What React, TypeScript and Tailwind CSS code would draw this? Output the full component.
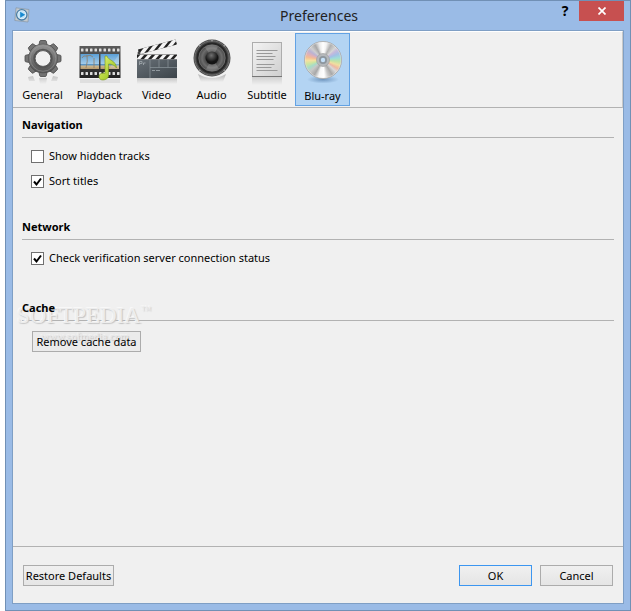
import { useState } from 'react'
import type { ReactNode } from 'react'

function GearIcon() {
  const teeth = [0, 45, 90, 135, 180, 225, 270, 315]
  return (
    <svg viewBox="0 0 48 52" className="h-[52px] w-12" aria-hidden="true">
      <defs>
        <linearGradient id="gear" x1="0" y1="0" x2="0" y2="1">
          <stop offset="0" stopColor="#8b8b8b" />
          <stop offset="1" stopColor="#5a5a5a" />
        </linearGradient>
        <linearGradient id="gearShade" x1="0" y1="0" x2="0" y2="1">
          <stop offset="0" stopColor="#999" stopOpacity="0.5" />
          <stop offset="1" stopColor="#999" stopOpacity="0" />
        </linearGradient>
      </defs>
      <path d="M9 42l5-1 2 5h-6zM20 43h8l-1 6h-6zM32 46l2-5 5 1-1 4z" fill="url(#gearShade)" />
      <g fill="#737373" stroke="#484848" strokeWidth="0.8">
        {teeth.map((a) => (
          <path key={a} d="M19.500 12l1.200-5.700q.2-.8 1-.8h4.600q.8 0 1 .8l1.200 5.700z" transform={`rotate(${a} 24 23.5)`} />
        ))}
      </g>
      <circle cx="24" cy="23.5" r="11" fill="none" stroke="#4c4c4c" strokeWidth="7.500" />
      <circle cx="24" cy="23.5" r="11" fill="none" stroke="url(#gear)" strokeWidth="6.500" />
      <circle cx="24" cy="23.5" r="12.800" fill="none" stroke="#a0a0a0" strokeWidth="0.5" />
      <circle cx="24" cy="23.5" r="9" fill="none" stroke="#555" strokeWidth="1.500" />
      <circle cx="24" cy="23.5" r="7.900" fill="#f0f0f0" stroke="#454545" strokeWidth="0.8" />
    </svg>
  )
}

function FilmIcon() {
  const holes = [5, 9.500, 14, 18.500, 23, 27.500, 32, 36.500, 41]
  return (
    <svg viewBox="0 0 48 52" className="h-[52px] w-12" aria-hidden="true">
      <defs>
        <linearGradient id="film" x1="0" y1="0" x2="0" y2="1">
          <stop offset="0" stopColor="#5c5c5c" />
          <stop offset="1" stopColor="#222" />
        </linearGradient>
        <linearGradient id="sky" x1="0" y1="0" x2="0" y2="1">
          <stop offset="0" stopColor="#5b9fd6" />
          <stop offset="0.65" stopColor="#a3cbe8" />
          <stop offset="0.7" stopColor="#5b95c4" />
          <stop offset="0.82" stopColor="#c9b48c" />
          <stop offset="1" stopColor="#b89a6b" />
        </linearGradient>
        <linearGradient id="note" x1="0" y1="0" x2="1" y2="1">
          <stop offset="0" stopColor="#e8f77a" />
          <stop offset="1" stopColor="#8cbb10" />
        </linearGradient>
      </defs>
      <rect x="4" y="44" width="40" height="4" fill="#999" opacity="0.2" />
      <rect x="3.5" y="11" width="41" height="32" fill="url(#film)" />
      {holes.map((x) => (
        <g key={x} fill="#ddd">
          <rect x={x} y="13.500" width="2.500" height="3" rx="0.5" />
          <rect x={x} y="37" width="2.500" height="3" rx="0.5" />
        </g>
      ))}
      <rect x="4.500" y="19" width="18.500" height="15" fill="url(#sky)" />
      <rect x="24.500" y="19" width="18.500" height="15" fill="url(#sky)" />
      <path d="M10 33q2-7 1-13M11 21q-4-1-5 2M11 21q3-2 6 1M18 33V23" fill="none" stroke="#8f7c66" strokeWidth="0.800" />
      <path d="M43 19L33 34h10z" fill="#fff" opacity="0.2" />
      <path d="M29 21h2c1 4.500 9 4 9.500 12-2.500-3.500-6-4-8-4v12c0 4-9 6-9.500 1-.3-3.500 3.500-4.500 6-3.500z" fill="url(#note)" stroke="#78951c" strokeWidth="0.600" />
    </svg>
  )
}

function ClapperIcon() {
  const stripes = [2, 9.500, 17, 24.500, 32, 39.500]
  return (
    <svg viewBox="0 0 48 52" className="h-[52px] w-12" aria-hidden="true">
      <defs>
        <linearGradient id="board" x1="0" y1="0" x2="1" y2="1">
          <stop offset="0" stopColor="#687077" />
          <stop offset="1" stopColor="#3c444a" />
        </linearGradient>
        <linearGradient id="boardShade" x1="0" y1="0" x2="0" y2="1">
          <stop offset="0" stopColor="#888" stopOpacity="0.4" />
          <stop offset="1" stopColor="#888" stopOpacity="0" />
        </linearGradient>
        <clipPath id="armClip">
          <path d="M5 14.500L42.500 4.500l1.500 5L6 19.500z" />
        </clipPath>
        <clipPath id="barClip">
          <rect x="4" y="19.500" width="40" height="5" />
        </clipPath>
      </defs>
      <rect x="4" y="43" width="40" height="6" fill="url(#boardShade)" />
      <g clipPath="url(#armClip)">
        <rect width="48" height="24" fill="#222" />
        {stripes.map((x) => (
          <path key={x} d={`M${x} 24L${x + 19} 0h4.500L${x + 4.500} 24z`} fill="#f5f5f5" />
        ))}
      </g>
      <g clipPath="url(#barClip)">
        <rect x="4" y="19" width="40" height="6" fill="#222" />
        {stripes.map((x) => (
          <path key={x} d={`M${x + 1} 24.500l4.500-5h4l-4.500 5z`} fill="#f5f5f5" />
        ))}
      </g>
      <rect x="4" y="24.500" width="40" height="18.500" fill="url(#board)" />
      <path d="M17 24.500V43M17 32.500h27M26 24.500v8M35 24.500v8" stroke="#8d969c" strokeWidth="0.7" fill="none" />
      <path d="M6.500 30v-3.500H9V28.500H6.500M10.500 30v-2h2M19 35.500h3M23 35.500h4" stroke="#a2a9ae" strokeWidth="0.8" fill="none" />
      <circle cx="6" cy="18" r="1.500" fill="#444" />
    </svg>
  )
}

function SpeakerIcon() {
  return (
    <svg viewBox="0 0 48 52" className="h-[52px] w-12" aria-hidden="true">
      <defs>
        <radialGradient id="cone">
          <stop offset="0.4" stopColor="#3a3a3a" />
          <stop offset="0.75" stopColor="#6c6c6c" />
          <stop offset="1" stopColor="#484848" />
        </radialGradient>
        <radialGradient id="cap" cx="0.45" cy="0.3">
          <stop offset="0" stopColor="#707070" />
          <stop offset="1" stopColor="#141414" />
        </radialGradient>
        <linearGradient id="floor" x1="0" y1="0" x2="0" y2="1">
          <stop offset="0" stopColor="#777" stopOpacity="0.5" />
          <stop offset="1" stopColor="#777" stopOpacity="0" />
        </linearGradient>
      </defs>
      <path d="M10 39q14 8 28 0l-3 8H13z" fill="url(#floor)" />
      <circle cx="24" cy="23" r="18.500" fill="#4a4a4a" />
      <circle cx="24" cy="23" r="17.200" fill="none" stroke="#707070" strokeWidth="1" />
      <circle cx="24" cy="23" r="15.500" fill="#262626" />
      <circle cx="24" cy="23" r="13.200" fill="url(#cone)" stroke="#777" strokeWidth="0.800" />
      <path d="M24 23L17 12.200A13 13 0 0 1 30 11.800zM24 23l7 10.800a13 13 0 0 1-13 .5z" fill="#ccc" opacity="0.250" />
      <circle cx="24" cy="23" r="6.500" fill="url(#cap)" />
      <g fill="#aaa">
        <circle cx="24" cy="5.800" r="0.800" />
        <circle cx="11.800" cy="10.800" r="0.800" />
        <circle cx="36.200" cy="10.800" r="0.800" />
        <circle cx="11.800" cy="35.200" r="0.800" />
        <circle cx="36.200" cy="35.200" r="0.800" />
      </g>
    </svg>
  )
}

function PageIcon() {
  return (
    <svg viewBox="0 0 48 52" className="h-[52px] w-12" aria-hidden="true">
      <defs>
        <linearGradient id="page" x1="0" y1="0" x2="1" y2="1">
          <stop offset="0" stopColor="#f3f3f3" />
          <stop offset="1" stopColor="#cfcfcf" />
        </linearGradient>
        <linearGradient id="pageShade" x1="0" y1="0" x2="0" y2="1">
          <stop offset="0" stopColor="#bbb" stopOpacity="0.6" />
          <stop offset="1" stopColor="#bbb" stopOpacity="0" />
        </linearGradient>
      </defs>
      <rect x="9" y="42" width="30" height="8" fill="url(#pageShade)" />
      <rect x="9.500" y="7.500" width="29" height="34" fill="url(#page)" stroke="#adadad" />
      <path d="M9 41.500h30" stroke="#777" />
      <path d="M13.500 15.500h21M13.500 18.500h16M13.500 21.500h19M13.500 24.500h17M13.500 29.500h18M13.500 32.500h15M13.500 35.500h21" stroke="#999" strokeWidth="1" />
    </svg>
  )
}

function DiscIcon() {
  return (
    <div className="relative h-[52px] w-12" aria-hidden="true">
      <svg viewBox="0 0 48 52" className="absolute inset-0">
        <defs>
          <radialGradient id="discFloor">
            <stop offset="0" stopColor="#456f9e" stopOpacity="0.6" />
            <stop offset="1" stopColor="#456f9e" stopOpacity="0" />
          </radialGradient>
        </defs>
        <ellipse cx="24" cy="43.500" rx="16" ry="4" fill="url(#discFloor)" />
      </svg>
      <div className="absolute top-[5px] left-[5px] h-[38px] w-[38px] rounded-full border border-[#a5a5a5] bg-[conic-gradient(#ffffff_0deg,#f2f2f2_12deg,#b0b0b0_28deg,#d5d5d5_45deg,#c5b9dc_55deg,#a3bfe6_68deg,#9fdcd8_82deg,#bfe3a5_95deg,#f0dfa0_108deg,#eeb8a2_120deg,#d8d8d8_132deg,#a8a8a8_148deg,#c8c8c8_162deg,#ffffff_176deg,#f6f6f6_195deg,#a8a8a8_210deg,#c8c8c8_228deg,#a7dcc8_242deg,#cfe5a0_256deg,#f5e0a0_268deg,#f4bd94_280deg,#dfb0b8_292deg,#b9b3d4_304deg,#cfcfcf_316deg,#a8a8a8_332deg,#e8e8e8_346deg,#ffffff_360deg)]" />
      <svg viewBox="0 0 48 52" className="absolute inset-0">
        <circle cx="24" cy="24" r="18" fill="none" stroke="#fff" strokeWidth="0.6" opacity="0.6" />
        <circle cx="24" cy="24" r="6.500" fill="#b5b8bb" stroke="#999" strokeWidth="0.600" />
        <circle cx="24" cy="24" r="4" fill="#8d969e" />
        <circle cx="24" cy="24" r="2.200" fill="#c5e0f8" />
      </svg>
    </div>
  )
}

function AppLogo() {
  return (
    <svg viewBox="0 0 16 16" className="h-4 w-4" aria-hidden="true">
      <path d="M2 .8L15 2.500 14 15 .8 13.500z" fill="#c3c9ce" stroke="#8796a5" strokeWidth="0.700" />
      <circle cx="7.800" cy="7.800" r="5.200" fill="#e9f4fb" stroke="#477da6" strokeWidth="1.300" />
      <circle cx="7.800" cy="7.800" r="3.700" fill="#c2e4f8" />
      <path d="M6.200 4.800l5 3-5 3z" fill="#1689d0" />
    </svg>
  )
}

const tabs = [
  { name: 'General', icon: <GearIcon />, width: 'w-[55px]' },
  { name: 'Playback', icon: <FilmIcon />, width: 'w-[59px]' },
  { name: 'Video', icon: <ClapperIcon />, width: 'w-[55px]' },
  { name: 'Audio', icon: <SpeakerIcon />, width: 'w-[55px]' },
  { name: 'Subtitle', icon: <PageIcon />, width: 'w-[56px]' },
  { name: 'Blu-ray', icon: <DiscIcon />, width: 'w-[55px]' },
]

function Section({ title, className, children }: { title: string; className: string; children: ReactNode }) {
  return (
    <section className={className}>
      <h2 className="border-b border-[#b2b2b2] pb-1 leading-4 font-bold">
        <span className="relative z-10">{title}</span>
      </h2>
      {children}
    </section>
  )
}

function CheckRow({ label, initial = false }: { label: string; initial?: boolean }) {
  const [checked, setChecked] = useState(initial)
  return (
    <label className="ml-[9px] flex h-[25px] items-center gap-[5px]">
      <span className="relative flex h-[13px] w-[13px]">
        <input
          type="checkbox"
          checked={checked}
          onChange={(e) => setChecked(e.target.checked)}
          className="h-[13px] w-[13px] appearance-none border border-[#707070] bg-white"
        />
        {checked && (
          <svg viewBox="0 0 13 13" className="pointer-events-none absolute inset-0" aria-hidden="true">
            <path d="M3 6.500l2.500 3L10 3.500" fill="none" stroke="#000" strokeWidth="2" />
          </svg>
        )}
      </span>
      {label}
    </label>
  )
}

const button = 'h-[21px] border leading-[19px] whitespace-nowrap'
const raised = 'bg-linear-to-b from-[#f0f0f0] to-[#e5e5e5]'

export default function App() {
  const [active, setActive] = useState('Blu-ray')

  return (
    <div className="bg-white pl-[5px] font-['Noto_Sans','Open_Sans',sans-serif] text-[11px] text-black">
      <div className="flex min-h-screen flex-col border border-[#7190b5] bg-[#9abbe6] px-[6px] pb-[6px]">
        <header className="flex h-[29px] items-start">
          <div className="flex flex-1 pt-[6px] pl-[2px]"><AppLogo /></div>
          <h1 className="text-[14px] leading-[29px] text-[#222]">Preferences</h1>
          <div className="flex flex-1 justify-end">
            <button aria-label="Help" className="h-5 w-7 text-[14px] leading-5 font-bold">?</button>
            <button aria-label="Close" className="flex h-5 w-[45px] items-center justify-center bg-[#c75050]">
              <svg viewBox="0 0 8 8" className="h-2 w-2" aria-hidden="true">
                <path d="M.5 .5l7 7M7.500 .5l-7 7" stroke="#fff" strokeWidth="1.700" />
              </svg>
            </button>
          </div>
        </header>

        <div className="flex flex-1 flex-col border border-[#7f9fc5] bg-[#f0f0f0]">
          <nav className="flex h-[77px] items-start border-t border-r border-b border-t-white border-r-[#c8c8c8] border-b-[#b2b2b2] pt-px pl-[2px]">
            {tabs.map((tab) => (
              <button
                key={tab.name}
                onClick={() => setActive(tab.name)}
                className={`${tab.width} flex h-[73px] flex-col items-center border ${
                  active === tab.name ? 'border-[#62a2e4] bg-[#b3d4f3] pt-[2px]' : 'border-transparent pt-px'
                }`}
              >
                {tab.icon}
                <span className="leading-4">{tab.name}</span>
              </button>
            ))}
          </nav>

          <main className="relative flex-1 px-[9px] pt-[9px]">
            <Section title="Navigation" className="h-[102px]">
              <div className="pt-[6px]">
                <CheckRow label="Show hidden tracks" />
                <CheckRow label="Sort titles" initial />
              </div>
            </Section>
            <Section title="Network" className="h-[81px]">
              <div className="pt-[6px]">
                <CheckRow label="Check verification server connection status" initial />
              </div>
            </Section>
            <Section title="Cache" className="pb-2">
              <button className={`${button} relative z-10 mt-[10px] ml-[10px] w-[109px] border-[#acacac] bg-black/2`}>
                Remove cache data
              </button>
            </Section>
            {/* watermark, sits over the rule but under the heading and button text */}
            <div className="pointer-events-none absolute top-[196px] left-1 font-['Liberation_Serif',serif] text-[#ededed] [text-shadow:1px_1px_1px_#c4c4c4,-1px_-1px_0_#f8f8f8]">
              <div className="flex items-start text-[23px] leading-6">
                SOFTPEDIA<span className="text-[10px] leading-3">™</span>
              </div>
              <div className="pl-6 text-[11px] leading-4">www.softpedia.com</div>
            </div>
          </main>

          <footer className="flex h-[57px] items-start gap-2 border-t border-[#b2b2b2] px-[10px] pt-[18px]">
            <button className={`${button} ${raised} mr-auto w-[91px] border-[#acacac]`}>Restore Defaults</button>
            <button className={`${button} ${raised} w-[73px] border-[#3c96f0]`}>OK</button>
            <button className={`${button} ${raised} w-[73px] border-[#acacac]`}>Cancel</button>
          </footer>
        </div>
      </div>
    </div>
  )
}
